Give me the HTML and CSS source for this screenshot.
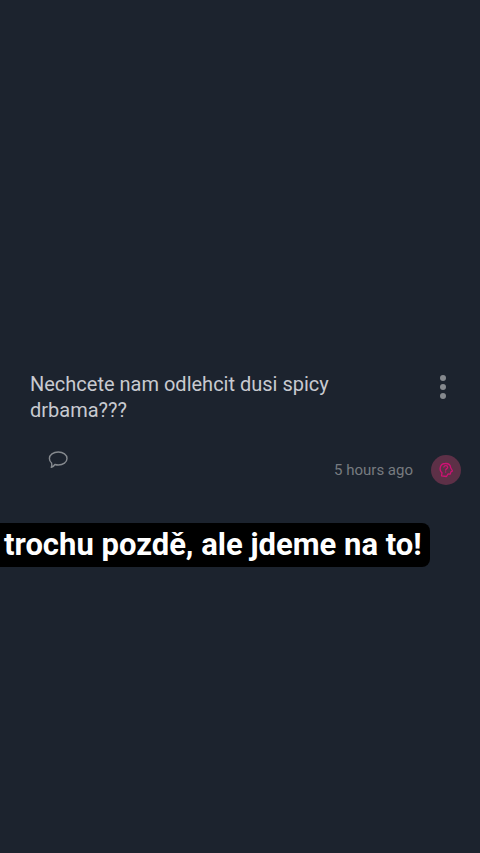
FILE: index.html
```html
<!DOCTYPE html>
<html lang="cs">
<head>
<meta charset="utf-8">
<meta name="viewport" content="width=device-width, initial-scale=1">
<title>Story</title>
<link rel="stylesheet" href="styles.css">
</head>
<body>
<main class="story">
  <article class="question">
    <header class="question-head">
      <p class="question-text">Nechcete nam odlehcit dusi spicy drbama???</p>
      <button class="icon-button menu" type="button" aria-label="Menu">
        <svg width="8" height="24" viewBox="0 0 8 24" fill="currentColor" aria-hidden="true"><circle cx="4" cy="3" r="3"/><circle cx="4" cy="12" r="3"/><circle cx="4" cy="21" r="3"/></svg>
      </button>
    </header>
    <footer class="question-foot">
      <button class="icon-button reply" type="button" aria-label="Reply">
        <svg width="20" height="18" viewBox="0 0 20 18" fill="none" stroke="currentColor" stroke-width="1.4" stroke-linejoin="round" aria-hidden="true"><path d="M10.300 1C15.200 1 19 3.900 19 7.500S15.200 14 10.300 14c-1.300 0-2.400-.2-3.400-.5C6 14.900 4.700 15.900 3.300 16.400c.6-1.300.7-2.900.3-4.400C2.200 10.900 1.400 9.300 1.400 7.500 1.400 3.900 5.300 1 10.300 1Z"/></svg>
      </button>
      <time class="age">5 hours ago</time>
      <span class="avatar">
        <svg width="16" height="16" viewBox="0 0 16 16" fill="none" stroke="currentColor" stroke-width="1.300" stroke-linecap="round" stroke-linejoin="round" aria-hidden="true"><path d="M3.500 13.800 4 10.800C2.300 9.300 1.900 6.700 2.400 4.800 3 2.700 4.800 1.600 7.300 1.500c3-.2 5.100 1.400 5.400 4.200l1.800 3.300-1.600.8-.6 2.300-2.300-.1-1.500 2.500Z"/><path d="M5.900 5c.3-1.800 3.700-1.800 3.800.2 0 1.400-1.900 1.400-2 2.800M7.700 10v.1"/></svg>
      </span>
    </footer>
  </article>
  <p class="caption">trochu pozdě, ale jdeme na to!</p>
</main>
</body>
</html>
```
FILE: styles.css
```css
* { box-sizing: border-box; }

body {
  margin: 0;
  background: #1c232e;
  color: #c8cad0;
  font-family: Roboto, "Liberation Sans", sans-serif;
}

.story {
  display: flex;
  flex-direction: column;
  align-items: flex-start;
  min-height: 100vh;
  padding-top: 371px;
}

.question { width: 100%; }

.question-head {
  display: flex;
  align-items: flex-start;
  justify-content: space-between;
  padding: 0 32px 0 30px;
}

.question-text {
  max-width: 320px;
  margin: 0;
  font-size: 20px;
  line-height: 26px;
}

.icon-button {
  display: flex;
  padding: 0;
  border: 0;
  background: none;
  color: #85898e;
}

.menu { padding: 4px 1px; }

.question-foot {
  display: flex;
  align-items: center;
  gap: 18px;
  margin-top: 32px;
  padding: 0 19px 0 48px;
}

.reply {
  align-self: flex-start;
  margin-right: auto;
  margin-top: -4px;
}

.age {
  color: #777b80;
  font-size: 15px;
  line-height: 20px;
}

.avatar {
  display: grid;
  place-items: center;
  width: 30px;
  height: 30px;
  border-radius: 50%;
  background: #5d3047;
  color: #cf1274;
}

.caption {
  margin: 38px 0 0;
  padding: 4px 8px 4px 4px;
  border-radius: 0 8px 8px 0;
  background: #000;
  color: #fff;
  font-size: 31px;
  font-weight: 700;
  line-height: 36px;
}
```
